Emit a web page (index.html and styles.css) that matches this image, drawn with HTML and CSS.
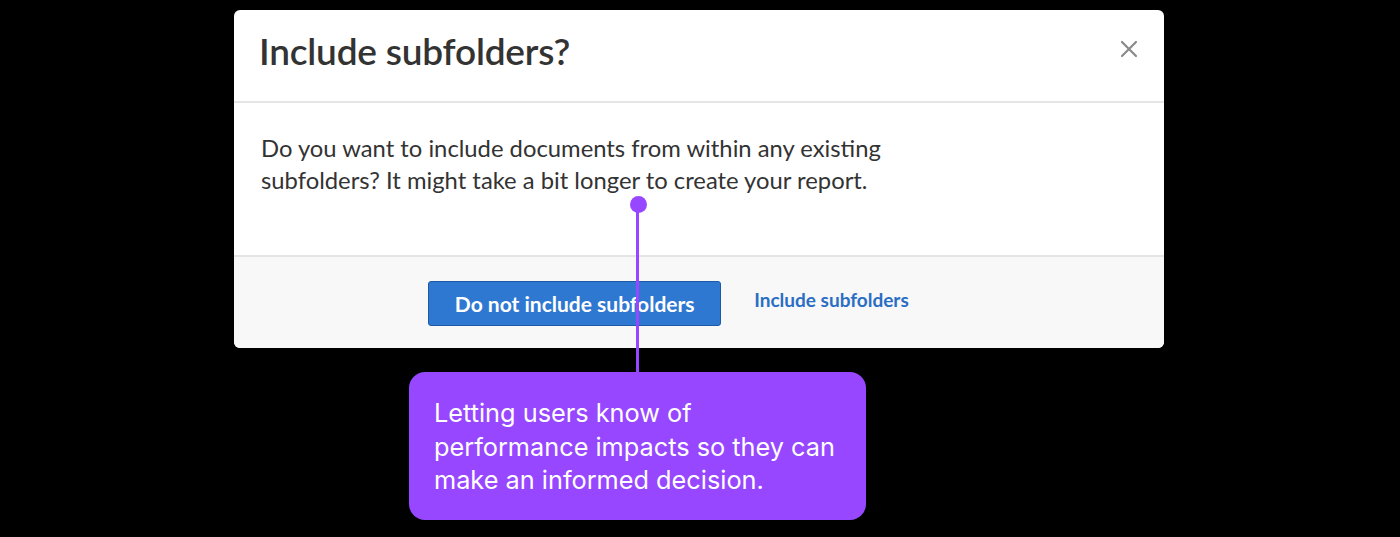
FILE: index.html
```html
<!DOCTYPE html>
<html lang="en">

<head>
    <meta charset="UTF-8">
    <meta name="viewport" content="width=device-width, initial-scale=1.0">
    <title>Include subfolders</title>
    <link rel="stylesheet" href="styles.css">
</head>

<body>
    <div class="stage">
        <div class="modal">
            <div class="modal-header">
                <h2>Include subfolders?</h2>
                <span class="close-button">
                    <svg width="18" height="18" viewBox="0 0 18 18">
                        <path d="M2 2 L16 16 M16 2 L2 16" stroke="#8a8a8a" stroke-width="2.2" stroke-linecap="round" />
                    </svg>
                </span>
            </div>
            <div class="modal-body">
                <p>Do you want to include documents from within any existing<br>subfolders? It might take a bit longer to create your report.</p>
            </div>
            <div class="modal-footer">
                <button class="primary-button">Do not include subfolders</button>
                <a class="link-button" href="#">Include subfolders</a>
            </div>
        </div>

        <div class="annotation">
            <span class="annotation-dot"></span>
            <span class="annotation-line"></span>
            <div class="annotation-box">Letting users know of performance impacts so they can make an informed decision.</div>
        </div>
    </div>
</body>

</html>
```

FILE: styles.css
```css
body {
    margin: 0;
    background-color: #000000;
    font-family: Lato, "Open Sans", sans-serif;
    height: 537px;
    overflow: hidden;
}

.stage {
    position: relative;
    display: flex;
    justify-content: center;
    padding-top: 10px;
    height: 527px;
}

.modal {
    width: 930px;
    height: 338px;
    background-color: #ffffff;
    border-radius: 6px;
    overflow: hidden;
    display: flex;
    flex-direction: column;
    margin-left: -2px;
}

.modal-header {
    box-sizing: border-box;
    height: 93px;
    display: flex;
    align-items: center;
    justify-content: space-between;
    padding: 0 26px 10px 25px;
    border-bottom: 2px solid #e5e5e5;
}

.modal-header h2 {
    margin: 0;
    font-size: 37px;
    font-weight: 600;
    color: #333333;
    letter-spacing: -0.2px;
}

.close-button {
    display: flex;
    margin-top: -4px;
}

.modal-body {
    height: 152px;
    padding: 0 27px;
    border-bottom: 2px solid #e5e5e5;
}

.modal-body p {
    margin: 29px 0 0;
    font-size: 23.8px;
    line-height: 32px;
    color: #333333;
}

.modal-footer {
    flex: 1;
    background-color: #f8f8f8;
    display: flex;
    align-items: center;
    justify-content: center;
    gap: 33px;
    padding-right: 61px;
}

.primary-button {
    width: 293px;
    height: 45px;
    background-color: #2f78d1;
    border: 1px solid #1d5aa6;
    border-radius: 3px;
    color: #ffffff;
    font-family: inherit;
    font-size: 21px;
    font-weight: 700;
    margin-top: 2px;
}

.link-button {
    color: #2a6ec4;
    font-size: 19px;
    font-weight: 700;
    text-decoration: none;
    margin-bottom: 6px;
}

.annotation {
    position: absolute;
    left: 409px;
    top: 196px;
    width: 457px;
    display: flex;
    flex-direction: column;
    align-items: center;
}

.annotation-dot {
    width: 17px;
    height: 17px;
    border-radius: 50%;
    background-color: #9747ff;
    margin-left: 1px;
}

.annotation-line {
    width: 3px;
    height: 168px;
    margin-top: -9px;
    background-color: #9747ff;
}

.annotation-box {
    box-sizing: border-box;
    width: 457px;
    height: 148px;
    background-color: #9747ff;
    border-radius: 16px;
    padding: 24px 25px 0 25px;
    font-family: Inter, sans-serif;
    font-size: 25.3px;
    line-height: 33.5px;
    color: #ffffff;
}
```
